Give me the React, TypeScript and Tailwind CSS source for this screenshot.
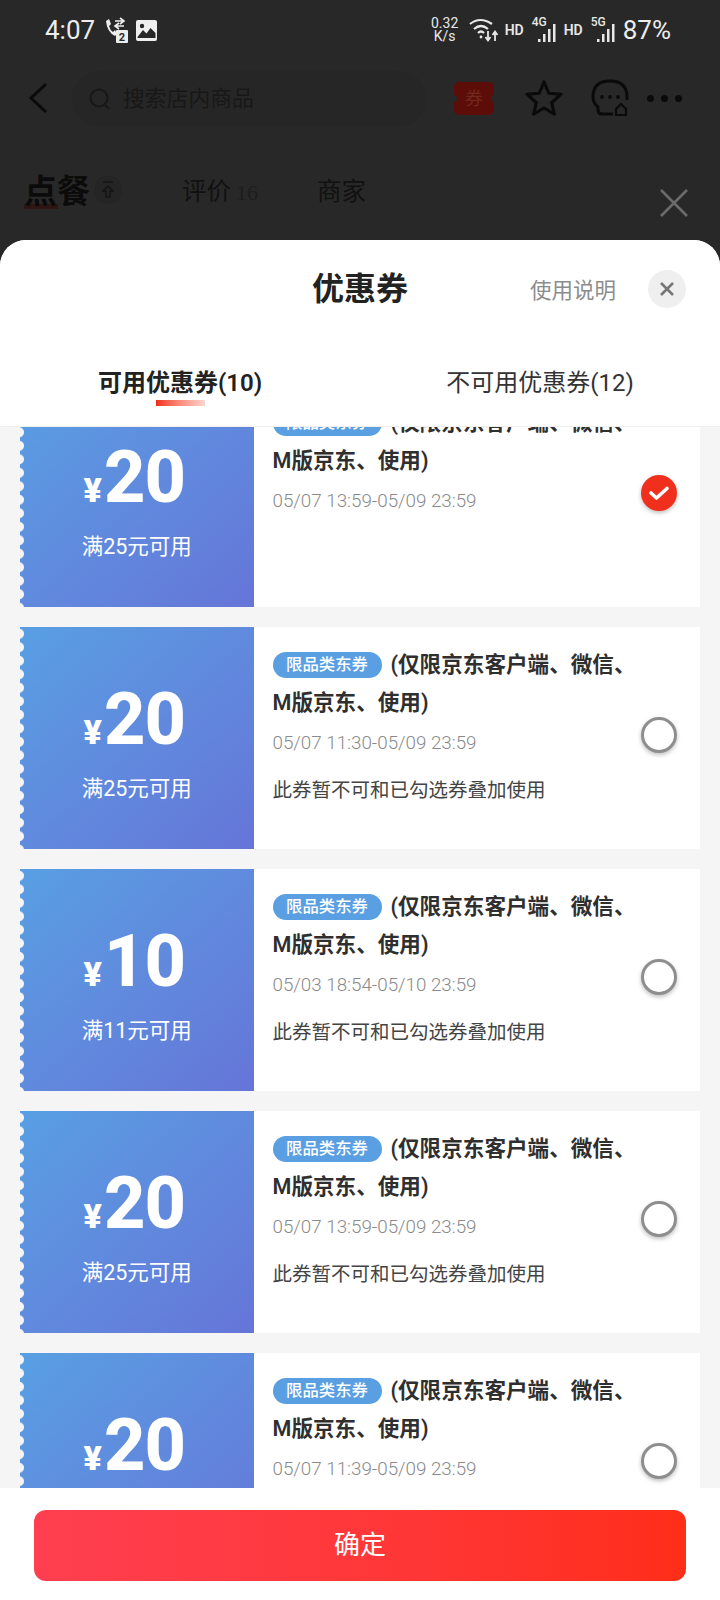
import React from "react";

const F = "font-['Roboto','Noto_Sans_CJK_SC',sans-serif]";

function Signal({ label }: { label: string }) {
  return (
    <div className="relative w-[26px] h-[28px]">
      <span className="absolute left-0 top-0 text-[12px] leading-[12px] font-medium text-[#e8e8e8]">{label}</span>
      <svg width="26" height="28" viewBox="0 0 26 28" className="absolute left-0 top-0" fill="#e8e8e8">
        <rect x="6" y="23" width="2.5" height="3" />
        <rect x="11" y="18" width="2.5" height="8" />
        <rect x="16" y="13" width="2.5" height="13" />
        <rect x="21" y="8" width="2.5" height="18" />
      </svg>
    </div>
  );
}

function StatusBar() {
  return (
    <div className="h-[60px] flex items-center pl-[45px] pr-[49px] text-[#ededed]">
      <span className="text-[26px] leading-none w-[58px]">4:07</span>
      <svg width="26" height="26" viewBox="0 0 24 26" className="mr-[7px]" fill="#ededed">
        <path d="M2 4 L5 2 L7 7 L5 9 Q6 13 9 15 L11 13 L13 17 L11 19 Q3 15 2 4Z" />
        <path d="M11 4 H19 M16 1 L20 4 L16 7 M20 9 H12 M15 6 L11 9 L15 12" stroke="#ededed" strokeWidth="1.6" fill="none" />
        <rect x="12" y="13" width="12" height="13" rx="1" />
        <text x="18" y="24" textAnchor="middle" fontSize="11" fontWeight="700" fill="#282828">2</text>
      </svg>
      <svg width="21" height="21" viewBox="0 0 21 21">
        <rect width="21" height="21" rx="2" fill="#efefef" />
        <circle cx="6" cy="6" r="2.2" fill="#282828" />
        <path d="M1.5 17 L7 10 L10.5 13.5 L14.5 8 L19.5 13 V18 H1.5Z" fill="#282828" />
      </svg>
      <div className="flex-1" />
      <div className="flex flex-col items-center text-[14px] leading-[13px] w-[28px] mr-[10px] text-[#e8e8e8]">
        <span>0.32</span>
        <span>K/s</span>
      </div>
      <svg width="30" height="26" viewBox="0 0 30 26" className="mr-[6px]" fill="none" stroke="#e8e8e8" strokeWidth="2.2">
        <path d="M1 7 Q11 -1 23 7" />
        <path d="M5 12 Q12 6 19 12" />
        <path d="M9 16 Q12 13 15 16" />
        <circle cx="12" cy="20" r="1.4" fill="#e8e8e8" stroke="none" />
        <path d="M19 14 V23 M16.5 20 L19 23.5 L21.5 20 M26 24 V15 M23.5 18 L26 14.5 L28.5 18" strokeWidth="1.8" />
      </svg>
      <span className="text-[14px] font-semibold text-[#e8e8e8] mr-[8px]">HD</span>
      <Signal label="4G" />
      <span className="text-[14px] font-semibold text-[#e8e8e8] ml-[6px] mr-[8px]">HD</span>
      <Signal label="5G" />
      <span className="text-[26px] leading-none ml-[6px]">87%</span>
    </div>
  );
}

function NavRow() {
  return (
    <div className="h-[76px] flex items-center pl-[28px]">
      <svg width="20" height="32" viewBox="0 0 20 32" fill="none" stroke="#0a0a0a" strokeWidth="3">
        <path d="M18 2 L3 16 L18 30" />
      </svg>
      <div className="ml-[24px] mt-[2px] w-[354px] h-[56px] rounded-full bg-[#262626] flex items-center pl-[17px]">
        <svg width="22" height="24" viewBox="0 0 22 24" fill="none" stroke="#181818" strokeWidth="2.2">
          <circle cx="10" cy="11" r="8.5" />
          <path d="M16 18 L20 22" />
        </svg>
        <span className="ml-[12px] text-[21.8px] text-[#181818]">搜索店内商品</span>
      </div>
      <div className="relative ml-[28px] w-[40px] h-[33px] rounded-[5px] bg-[#5c0d08] flex items-center justify-center text-[18px] text-[#71281e] overflow-hidden">
        券
        <div className="absolute -left-[3px] top-[13px] w-[6px] h-[7px] rounded-full bg-[#282828]" />
        <div className="absolute -right-[3px] top-[13px] w-[6px] h-[7px] rounded-full bg-[#282828]" />
      </div>
      <svg width="38" height="38" viewBox="0 0 40 38" className="ml-[31px]" fill="none" stroke="#0a0a0a" strokeWidth="3.2" strokeLinejoin="round">
        <path d="M20 2 L25 14 L38 15 L28 24 L31 36 L20 29.5 L9 36 L12 24 L2 15 L15 14Z" />
      </svg>
      <svg width="38" height="38" viewBox="0 0 38 38" className="ml-[28px]" fill="none" stroke="#0a0a0a" strokeWidth="3">
        <path d="M22 35 H11 Q7 35 7 31 V28 Q2 24 2 18 Q2 2 19 2 Q36 2 36 18 V21" />
        <circle cx="11" cy="18" r="1.9" fill="#0a0a0a" stroke="none" />
        <circle cx="19" cy="18" r="1.9" fill="#0a0a0a" stroke="none" />
        <circle cx="27" cy="18" r="1.9" fill="#0a0a0a" stroke="none" />
        <path d="M30 25 L25 30 V36 H35 V30Z" strokeWidth="2.2" />
      </svg>
      <div className="ml-[18px] flex gap-[7px]">
        <div className="w-[7px] h-[7px] rounded-full bg-[#0a0a0a]" />
        <div className="w-[7px] h-[7px] rounded-full bg-[#0a0a0a]" />
        <div className="w-[7px] h-[7px] rounded-full bg-[#0a0a0a]" />
      </div>
    </div>
  );
}

function DimTabs() {
  return (
    <div className="flex-1 flex items-start pl-[24px] pt-[32px] pr-[32px]">
      <div className="relative w-[66px]">
        <div className="absolute left-0 bottom-[7px] w-[34px] h-[5px] bg-[#2e1514]" />
        <span className="relative text-[33px] leading-[48px] font-bold text-[#0b0b0b]">点餐</span>
      </div>
      <div className="ml-[4px] mt-[8px] w-[28px] h-[28px] rounded-full bg-[#252525] flex items-center justify-center">
        <svg width="14" height="18" viewBox="0 0 14 18" fill="none" stroke="#151515" strokeWidth="1.6">
          <path d="M2 1 H12 M7 5 L2 10 H5 V16 H9 V10 H12Z" />
        </svg>
      </div>
      <span className="ml-[60px] text-[24.5px] leading-[48px] text-[#111]">评价</span>
      <span className="ml-[5px] text-[22px] leading-[50px] text-[#1d1d1d] font-['Liberation_Serif',serif]">16</span>
      <span className="ml-[59px] text-[24.5px] leading-[48px] text-[#111]">商家</span>
      <div className="flex-1" />
      <svg width="28" height="28" viewBox="0 0 28 28" className="mt-[21px]" fill="none" stroke="#6b6b6b" strokeWidth="2.6">
        <path d="M1 1 L27 27 M27 1 L1 27" />
      </svg>
    </div>
  );
}

function SheetHeader() {
  return (
    <div className="bg-white shrink-0 border-b border-[#efefef]">
      <div className="relative h-[96px] flex justify-center pt-[25px]">
        <span className="text-[32px] leading-[48px] font-bold text-[#222]">优惠券</span>
        <div className="absolute right-[34px] top-[28px] flex items-center">
          <span className="text-[21.5px] leading-[38px] text-[#8c8c8c] mr-[32px] mt-[4px]">使用说明</span>
          <div className="w-[38px] h-[38px] rounded-full bg-[#efefef] flex items-center justify-center">
            <svg width="16" height="16" viewBox="0 0 16 16" fill="none" stroke="#777" strokeWidth="2.6">
              <path d="M2 2 L14 14 M14 2 L2 14" />
            </svg>
          </div>
        </div>
      </div>
      <div className="h-[90px] flex">
        <div className="w-[360px] flex flex-col items-center pt-[31px]">
          <span className="text-[24px] leading-[32px] font-semibold text-[#222]">可用优惠券(10)</span>
          <div className="mt-[1px] w-[49px] h-[6px] bg-gradient-to-r from-[#ee2a12] to-[#fbd5d0]" />
        </div>
        <div className="w-[360px] flex flex-col items-center pt-[31px]">
          <span className="text-[24px] leading-[32px] text-[#333]">不可用优惠券(12)</span>
        </div>
      </div>
    </div>
  );
}

type C = { amount: string; min: string; date: string; note?: boolean; checked?: boolean };

function Coupon({ amount, min, date, note, checked }: C) {
  return (
    <div className="h-[222px] mb-[20px] ml-[20px] mr-[20px] bg-white flex shrink-0">
      <div className="relative w-[233.5px] bg-gradient-to-br from-[#589fe3] to-[#6575d8] flex flex-col items-center pt-[57px] text-white">
        <div className="absolute left-0 top-0 bottom-0 w-[4px] bg-[radial-gradient(circle_at_-1px_50%,#f5f5f5_4.5px,transparent_5.5px)] bg-[length:5px_13.5px]" />
        <div className="flex items-end h-[72px] pr-[5px]">
          <span className="text-[34px] leading-[34px] font-black mr-[2px] mb-[7px]">¥</span>
          <span className="text-[72px] leading-[72px] font-extrabold tracking-[-1px]">{amount}</span>
        </div>
        <span className="mt-[19px] text-[21.5px] leading-[28px]">{min}</span>
      </div>
      <div className="flex-1 pl-[19px] pt-[19px]">
        <div className="h-[38px] flex items-center">
          <span className="w-[109px] h-[26px] rounded-full bg-[#5b9fe3] text-white text-[16.4px] font-medium flex items-center justify-center">限品类东券</span>
          <span className="ml-[9px] text-[21.6px] font-semibold text-[#2f2f2f] whitespace-nowrap">(仅限京东客户端、微信、</span>
        </div>
        <div className="h-[38px] flex items-center text-[21.6px] font-semibold text-[#2f2f2f]">M版京东、使用)</div>
        <div className="mt-[9px] h-[24px] leading-[24px] text-[18.8px] font-light text-[#8a8a8a] whitespace-nowrap">{date}</div>
        {note && <div className="mt-[22px] h-[28px] leading-[28px] text-[19.5px] text-[#444] whitespace-nowrap">此券暂不可和已勾选券叠加使用</div>}
      </div>
      {checked ? (
        <div className="self-start mt-[90px] mr-[23px] w-[36px] h-[36px] rounded-full bg-[#f0301c] shadow-[0_2px_4px_rgba(0,0,0,0.25)] flex items-center justify-center">
          <svg width="22" height="16" viewBox="0 0 22 16" fill="none" stroke="#fff" strokeWidth="3.6" strokeLinecap="round" strokeLinejoin="round">
            <path d="M3 8 L8.5 13 L19 3.5" />
          </svg>
        </div>
      ) : (
        <div className="self-start mt-[90px] mr-[23px] w-[36px] h-[36px] rounded-full bg-white border-[3px] border-[#8e8e8e] shadow-[0_2px_4px_rgba(0,0,0,0.25)]" />
      )}
    </div>
  );
}

const coupons: C[] = [
  { amount: "20", min: "满25元可用", date: "05/07 13:59-05/09 23:59", checked: true },
  { amount: "20", min: "满25元可用", date: "05/07 11:30-05/09 23:59", note: true },
  { amount: "10", min: "满11元可用", date: "05/03 18:54-05/10 23:59", note: true },
  { amount: "20", min: "满25元可用", date: "05/07 13:59-05/09 23:59", note: true },
  { amount: "20", min: "满25元可用", date: "05/07 11:39-05/09 23:59", note: true },
];

export default function App() {
  return (
    <div className={`${F} w-[720px] h-[1600px] bg-[#282828] flex flex-col overflow-hidden`}>
      <div className="h-[240px] shrink-0 flex flex-col">
        <StatusBar />
        <NavRow />
        <DimTabs />
      </div>
      <div className="flex-1 min-h-0 bg-white rounded-t-[26px] overflow-hidden flex flex-col">
        <SheetHeader />
        <div className="flex-1 min-h-0 bg-[#f5f5f5] overflow-hidden">
          <div className="-mt-[42px] flex flex-col">
            {coupons.map((c, i) => (
              <Coupon key={i} {...c} />
            ))}
          </div>
        </div>
        <div className="h-[112px] shrink-0 bg-white px-[34px] pt-[22px]">
          <div className="h-[71px] rounded-[12px] bg-gradient-to-r from-[#ff3f50] to-[#ff2e17] flex items-center justify-center text-white text-[26px]">确定</div>
        </div>
      </div>
    </div>
  );
}
